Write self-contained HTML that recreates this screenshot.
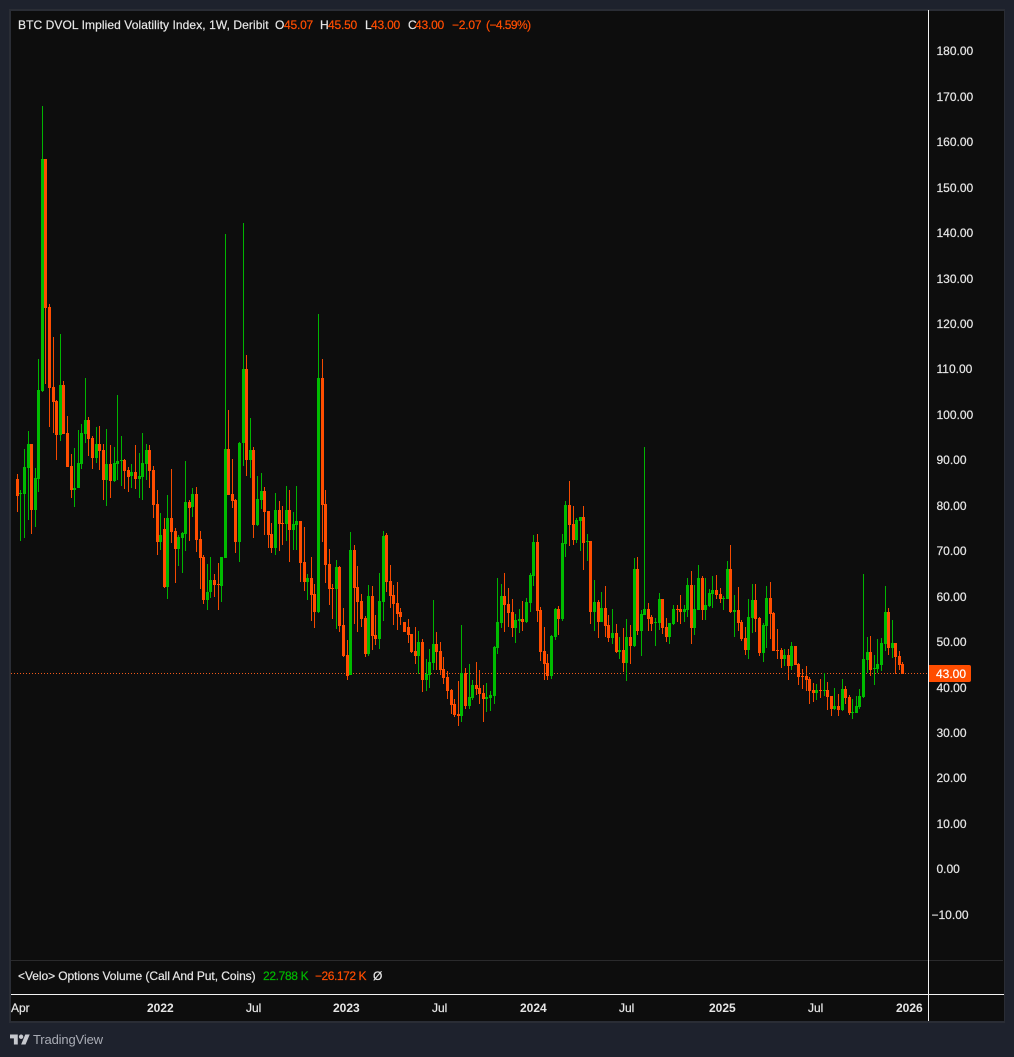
<!DOCTYPE html>
<html><head><meta charset="utf-8"><title>BTC DVOL</title>
<style>
html,body{margin:0;padding:0;width:1014px;height:1057px;background:#1e222d;overflow:hidden}
body{position:relative;font-family:"Liberation Sans",sans-serif;font-size:12px;color:#e6e6e6}
.t{position:absolute;white-space:nowrap;line-height:14px;height:14px;-webkit-text-stroke:.2px currentColor}
.o{color:#ff4d00}.g{color:#00b800}
.p{left:936.5px}
.b{font-weight:bold;-webkit-text-stroke:0}
</style></head><body>
<div style="position:absolute;left:9px;top:9px;width:993px;height:1010px;background:#0d0d0d;border:solid #2a2d35;border-width:2px 1px 2px 2px"></div>
<svg width="1014" height="1057" viewBox="0 0 1014 1057" style="position:absolute;left:0;top:0" shape-rendering="crispEdges" fill="none">
<path d="M11 673.5H928" stroke="#f0591a" stroke-width="1" stroke-dasharray="1 2"/>
<path stroke="#00b400" stroke-width="1" d="M20.5 490V541M24.5 449V538M28.5 431V520M35.5 468V527M38.5 359V492M42.5 106V392M60.5 334V441M74.5 448V507M78.5 430V488M81.5 424V469M85.5 378V443M96.5 427V463M106.5 429V506M114.5 447V482M117.5 395V480M121.5 436V486M131.5 464V488M139.5 453V498M142.5 433V500M146.5 444V480M160.5 513V550M167.5 495V599M178.5 535V566M182.5 532V573M185.5 461V551M192.5 488V517M207.5 564V610M210.5 557V598M221.5 557V602M225.5 234V558M239.5 442V562M243.5 223V466M250.5 418V478M257.5 476V526M261.5 473V509M275.5 493V555M286.5 486V541M293.5 512V550M296.5 486V550M307.5 574V600M318.5 314V613M336.5 560V629M350.5 532V675M368.5 585V656M379.5 573V649M383.5 531V621M418.5 631V674M426.5 659V691M429.5 649V688M433.5 600V670M461.5 625V722M469.5 664V709M472.5 680V700M486.5 683V712M490.5 691V711M494.5 646V704M497.5 578V654M501.5 584V628M515.5 614V643M519.5 609V633M526.5 598V623M530.5 573V612M533.5 535V586M551.5 635V679M555.5 608V640M562.5 534V621M565.5 501V557M576.5 518V543M580.5 517V551M587.5 534V561M594.5 580V631M601.5 592V622M612.5 609V644M619.5 637V659M626.5 619V681M634.5 558V647M641.5 610V656M644.5 447V615M655.5 618V646M659.5 593V630M669.5 623V644M673.5 605V625M684.5 605V622M687.5 578V617M694.5 585V635M698.5 565V610M705.5 578V620M709.5 589V607M712.5 576V608M723.5 596V610M727.5 561V599M734.5 595V637M748.5 599V659M752.5 584V633M763.5 623V662M766.5 586V648M784.5 649V666M791.5 642V670M816.5 684V700M824.5 673V696M834.5 688V710M842.5 679V711M852.5 699V719M856.5 696V713M859.5 689V709M863.5 574V698M867.5 637V673M874.5 655V685M877.5 639V673M881.5 638V671M885.5 586V651M892.5 620V658"/>
<path stroke="#00bb00" stroke-width="3" d="M20.5 493V494M24.5 467V494M28.5 444V468M35.5 478V510M38.5 390V479M42.5 159V391M60.5 385V435M74.5 488V490M78.5 463V488M81.5 433V464M85.5 420V434M96.5 444V458M106.5 464V480M114.5 463V481M117.5 461V464M121.5 460V461M131.5 472V476M139.5 476V479M142.5 463V477M146.5 450V464M160.5 535V542M167.5 518V587M178.5 537V549M182.5 533V538M185.5 502V534M192.5 494V507M207.5 592V600M210.5 580V592M221.5 557V586M225.5 449V558M239.5 443V542M243.5 369V443M250.5 450V460M257.5 499V525M261.5 491V500M275.5 510V548M286.5 510V524M293.5 524V530M296.5 521V525M307.5 578V582M318.5 378V612M336.5 567V589M350.5 550V675M368.5 596V654M379.5 601V639M383.5 536V602M418.5 642V656M426.5 674V680M429.5 662V675M433.5 644V663M461.5 673V716M469.5 697V706M472.5 685V698M486.5 697V699M490.5 695V698M494.5 647V696M497.5 622V648M501.5 596V623M515.5 620V628M519.5 619V621M526.5 602V622M530.5 575V603M533.5 542V576M551.5 636V676M555.5 609V637M562.5 543V619M565.5 505V544M576.5 520V540M580.5 517V521M587.5 541V542M594.5 602V612M601.5 608V622M612.5 633V638M619.5 650V652M626.5 637V663M634.5 569V646M641.5 614V631M644.5 609V615M655.5 622V623M659.5 599V623M669.5 623V637M673.5 609V624M684.5 609V612M687.5 585V610M694.5 609V628M698.5 578V610M705.5 605V610M709.5 593V606M712.5 590V594M723.5 598V599M727.5 569V599M734.5 610V612M748.5 617V650M752.5 600V618M763.5 625V653M766.5 598V626M784.5 655V659M791.5 646V666M816.5 690V693M824.5 690V691M834.5 706V709M842.5 689V710M852.5 712V713M856.5 706V713M859.5 696V707M863.5 659V697M867.5 652V660M874.5 668V669M877.5 664V669M881.5 643V665M885.5 612V644M892.5 643V648"/>
<path stroke="#f44a00" stroke-width="1" d="M17.5 474V512M31.5 444V534M45.5 159V384M49.5 304V427M53.5 337V433M56.5 400V460M63.5 381V434M67.5 416V467M71.5 454V498M88.5 417V456M92.5 436V469M99.5 426V470M103.5 444V500M110.5 445V498M124.5 459V489M128.5 467V492M135.5 445V489M149.5 445V488M153.5 466V518M157.5 490V555M164.5 518V588M171.5 469V543M175.5 528V583M189.5 500V541M196.5 487V552M200.5 531V589M203.5 555V604M214.5 574V597M218.5 563V610M228.5 410V495M232.5 459V508M235.5 499V553M246.5 355V476M253.5 447V538M264.5 487V535M268.5 511V548M271.5 523V553M279.5 501V551M282.5 506V545M289.5 490V562M300.5 521V582M304.5 527V591M311.5 557V621M314.5 584V628M322.5 359V542M325.5 490V583M329.5 549V605M332.5 584V619M339.5 566V632M343.5 608V657M347.5 640V680M354.5 545V624M357.5 566V632M361.5 594V627M365.5 616V657M372.5 586V650M375.5 615V645M386.5 533V592M390.5 565V608M393.5 585V625M397.5 582V630M400.5 608V625M404.5 622V632M408.5 619V643M411.5 634V653M415.5 627V664M422.5 639V692M436.5 632V670M440.5 642V675M443.5 657V684M447.5 671V699M451.5 689V714M454.5 699V717M458.5 681V726M465.5 668V709M476.5 662V695M479.5 670V704M483.5 685V722M504.5 573V632M508.5 588V627M512.5 599V637M522.5 601V631M537.5 534V622M540.5 607V661M544.5 627V680M547.5 654V680M558.5 606V635M569.5 481V546M573.5 506V545M583.5 506V570M590.5 541V624M598.5 600V638M605.5 586V637M608.5 615V642M616.5 624V653M623.5 628V672M630.5 625V664M637.5 557V635M648.5 603V631M651.5 615V631M662.5 599V634M666.5 618V642M677.5 605V622M680.5 595V624M691.5 571V644M702.5 576V620M716.5 575V599M720.5 588V603M730.5 545V613M738.5 587V631M741.5 620V641M745.5 627V655M755.5 584V632M759.5 617V656M770.5 582V639M773.5 612V651M777.5 629V659M781.5 648V668M788.5 649V680M795.5 646V665M798.5 663V685M802.5 669V689M806.5 666V691M809.5 677V704M813.5 683V702M820.5 679V698M827.5 682V710M831.5 696V716M838.5 694V716M845.5 686V704M849.5 695V715M870.5 636V676M888.5 608V655M895.5 643V674M899.5 651V670M902.5 662V674"/>
<path stroke="#ff4d00" stroke-width="3" d="M17.5 479V496M31.5 444V510M45.5 159V308M49.5 307V388M53.5 387V402M56.5 401V435M63.5 385V434M67.5 433V467M71.5 466V490M88.5 420V439M92.5 438V458M99.5 444V451M103.5 450V480M110.5 464V481M124.5 460V471M128.5 470V477M135.5 472V479M149.5 450V471M153.5 470V505M157.5 504V542M164.5 529V587M171.5 518V532M175.5 531V549M189.5 502V508M196.5 494V540M200.5 539V558M203.5 557V600M214.5 580V585M218.5 584V585M228.5 449V495M232.5 494V501M235.5 500V542M246.5 369V460M253.5 450V525M264.5 491V512M268.5 511V535M271.5 534V548M279.5 510V524M282.5 523V524M289.5 510V530M300.5 521V563M304.5 562V582M311.5 578V595M314.5 594V612M322.5 378V505M325.5 504V565M329.5 564V589M332.5 588V589M339.5 567V626M343.5 625V656M347.5 655V676M354.5 550V588M357.5 587V602M361.5 601V619M365.5 618V654M372.5 596V636M375.5 635V639M386.5 535V582M390.5 581V596M393.5 595V604M397.5 603V614M400.5 612V617M404.5 622V632M408.5 627V635M411.5 634V652M415.5 651V656M422.5 642V680M436.5 644V652M440.5 651V670M443.5 669V678M447.5 677V691M451.5 690V705M454.5 704V715M458.5 714V716M465.5 673V706M476.5 685V689M479.5 688V694M483.5 693V699M504.5 596V605M508.5 604V613M512.5 612V628M522.5 619V622M537.5 542V611M540.5 610V652M544.5 651V664M547.5 663V676M558.5 609V619M569.5 505V525M573.5 524V540M583.5 517V543M590.5 541V612M598.5 602V622M605.5 608V626M608.5 625V638M616.5 633V652M623.5 650V663M630.5 637V646M637.5 569V631M648.5 609V619M651.5 617V624M662.5 599V628M666.5 627V637M677.5 609V610M680.5 609V612M691.5 585V628M702.5 578V610M716.5 590V595M720.5 594V599M730.5 569V612M738.5 610V623M741.5 622V639M745.5 638V650M755.5 600V619M759.5 618V653M770.5 598V614M773.5 613V651M777.5 650V651M781.5 650V659M788.5 655V666M795.5 646V665M798.5 664V677M802.5 676V677M806.5 676V680M809.5 679V691M813.5 690V693M820.5 690V691M827.5 690V697M831.5 696V709M838.5 706V710M845.5 689V698M849.5 697V713M870.5 652V670M888.5 612V648M895.5 643V657M899.5 656V665M902.5 664V674"/>
<path d="M11 960.5H1003" stroke="#2a2a2c"/>
<path d="M11 994.5H1004" stroke="#f2f2f2"/>
<path d="M928.5 10V1021" stroke="#f2f2f2"/>
</svg>

<div class="t" style="left:18px;top:18px;letter-spacing:.08px">BTC DVOL Implied Volatility Index, 1W, Deribit</div>
<div class="t" style="left:275px;top:18px">O</div><div class="t o" style="left:284px;top:18px;letter-spacing:-.2px">45.07</div>
<div class="t" style="left:320px;top:18px">H</div><div class="t o" style="left:328px;top:18px;letter-spacing:-.2px">45.50</div>
<div class="t" style="left:365px;top:18px">L</div><div class="t o" style="left:371px;top:18px;letter-spacing:-.2px">43.00</div>
<div class="t" style="left:408px;top:18px">C</div><div class="t o" style="left:415px;top:18px;letter-spacing:-.2px">43.00</div>
<div class="t o" style="left:452px;top:18px;letter-spacing:-.2px">−2.07</div>
<div class="t o" style="left:486px;top:18px;letter-spacing:-.55px">(−4.59%)</div>

<div class="t p" style="top:44px">180.00</div>
<div class="t p" style="top:90px">170.00</div>
<div class="t p" style="top:135px">160.00</div>
<div class="t p" style="top:181px">150.00</div>
<div class="t p" style="top:226px">140.00</div>
<div class="t p" style="top:272px">130.00</div>
<div class="t p" style="top:317px">120.00</div>
<div class="t p" style="top:362px">110.00</div>
<div class="t p" style="top:408px">100.00</div>
<div class="t p" style="top:453px">90.00</div>
<div class="t p" style="top:499px">80.00</div>
<div class="t p" style="top:544px">70.00</div>
<div class="t p" style="top:590px">60.00</div>
<div class="t p" style="top:635px">50.00</div>
<div class="t p" style="top:681px">40.00</div>
<div class="t p" style="top:726px">30.00</div>
<div class="t p" style="top:771px">20.00</div>
<div class="t p" style="top:817px">10.00</div>
<div class="t p" style="top:862px">0.00</div>
<div class="t" style="left:931.5px;top:908px">−10.00</div>

<div style="position:absolute;left:929px;top:665px;width:42px;height:17px;background:#ff4d00;border-radius:0 2px 2px 0"></div>
<div class="t" style="left:936px;top:667px;color:#fff">43.00</div>

<div class="t" style="left:18px;top:969px;letter-spacing:-.06px">&lt;Velo&gt; Options Volume (Call And Put, Coins)</div>
<div class="t g" style="left:263px;top:969px;letter-spacing:-.35px">22.788 K</div>
<div class="t o" style="left:315px;top:969px;letter-spacing:-.45px">−26.172 K</div>
<div class="t" style="left:373px;top:969px">Ø</div>

<div class="t" style="left:11px;top:1001px">Apr</div>
<div class="t b" style="left:147px;top:1001px">2022</div>
<div class="t" style="left:246px;top:1001px">Jul</div>
<div class="t b" style="left:333px;top:1001px">2023</div>
<div class="t" style="left:432px;top:1001px">Jul</div>
<div class="t b" style="left:520px;top:1001px">2024</div>
<div class="t" style="left:619px;top:1001px">Jul</div>
<div class="t b" style="left:709px;top:1001px">2025</div>
<div class="t" style="left:808px;top:1001px">Jul</div>
<div class="t b" style="left:896px;top:1001px">2026</div>

<svg width="20" height="11" viewBox="0 3 36 20" style="position:absolute;left:10px;top:1034px" preserveAspectRatio="none"><path fill="#c6c8ce" d="M14 22H7V11H0V4h14v18zM28 22h-8l7.5-18h8L28 22z"/><circle cx="20" cy="8" r="4" fill="#c6c8ce"/></svg>
<div class="t" style="left:33px;top:1033px;font-size:13px;color:#a9acb5;letter-spacing:-.15px;-webkit-text-stroke:0">TradingView</div>
</body></html>
